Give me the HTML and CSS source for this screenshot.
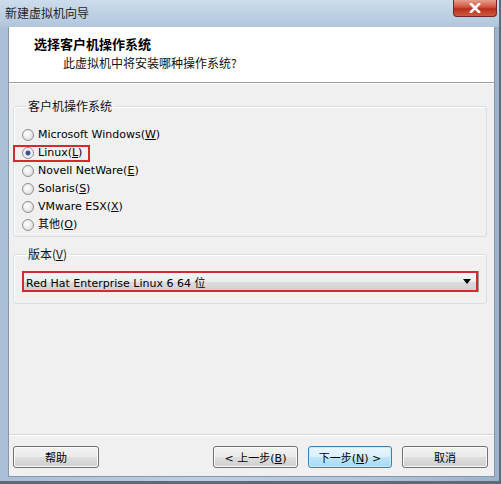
FILE: index.html
```html
<!DOCTYPE html>
<html lang="zh">
<head>
<meta charset="utf-8">
<link rel="stylesheet" href="styles.css">
</head>
<body>
<div class="window">
  <div class="titlebar">
    <span class="title">新建虚拟机向导</span>
    <span class="close"><svg width="14" height="10" viewBox="0 0 14 10"><path d="M3 1 L11 9 M11 1 L3 9" stroke="#fff" stroke-width="2.6" stroke-linecap="square"/></svg></span>
  </div>
  <div class="client">
    <div class="header">
      <div class="h-title">选择客户机操作系统</div>
      <div class="h-sub">此虚拟机中将安装哪种操作系统?</div>
    </div>
    <div class="body">
      <fieldset class="group os-group">
        <legend>客户机操作系统</legend>
        <div class="radio"><span class="dot"></span><span>Microsoft Windows(<u>W</u>)</span></div>
        <div class="radio marked"><span class="dot on"></span><span>Linux(<u>L</u>)</span><span class="mark"></span></div>
        <div class="radio"><span class="dot"></span><span>Novell NetWare(<u>E</u>)</span></div>
        <div class="radio"><span class="dot"></span><span>Solaris(<u>S</u>)</span></div>
        <div class="radio"><span class="dot"></span><span>VMware ESX(<u>X</u>)</span></div>
        <div class="radio"><span class="dot"></span><span>其他(<u>O</u>)</span></div>
      </fieldset>
      <fieldset class="group ver-group">
        <legend>版本(<u>V</u>)</legend>
        <div class="combo">
          <span class="combo-text">Red Hat Enterprise Linux 6 64 位</span>
          <svg class="arrow" width="8" height="5" viewBox="0 0 8 5"><path d="M0 0 H8 L4 5 Z" fill="#000"/></svg>
        </div>
      </fieldset>
    </div>
    <div class="footer">
      <button class="btn">帮助</button>
      <button class="btn back">&lt; 上一步(<u>B</u>)</button>
      <button class="btn focus">下一步(<u>N</u>) &gt;</button>
      <button class="btn">取消</button>
    </div>
  </div>
</div>
</body>
</html>
```
FILE: styles.css
```css
html, body {
  margin: 0;
  padding: 0;
  background: #ffffff;
}
.window {
  width: 501px;
  height: 484px;
  box-sizing: border-box;
  display: flex;
  flex-direction: column;
  background: linear-gradient(90deg, #a9bfd6 0%, #bccfe2 40%, #b3c7dc 70%, #9db3ca 100%);
  border-right: 2px solid #5b6b7d;
  border-bottom: 3px solid #5b6b7d;
  font-family: "DejaVu Sans", "Noto Sans CJK SC", sans-serif;
  font-size: 11px;
  color: #000;
}
.titlebar {
  height: 27px;
  flex: none;
  display: flex;
  align-items: flex-start;
  background: linear-gradient(180deg, #cddcec 0%, #bccfe2 60%, #b1c5da 100%);
}
.title {
  margin: 5px 0 0 5px;
  font-family: "Noto Sans CJK SC", sans-serif;
  font-size: 12px;
  line-height: 16px;
  color: #1e1e1e;
}
.close {
  margin-left: auto;
  margin-right: 2px;
  width: 44px;
  height: 17px;
  box-sizing: border-box;
  display: flex;
  align-items: center;
  justify-content: center;
  border: 1px solid #6b2a22;
  border-top: none;
  border-radius: 0 0 4px 4px;
  background: linear-gradient(180deg, #e6a08f 0%, #d0523f 45%, #b82d1c 55%, #cf5a3e 100%);
}
.client {
  flex: 1;
  margin: 0 4px 4px 8px;
  display: flex;
  flex-direction: column;
  background: #f0f0f0;
  border: 1px solid #8397ad;
  border-top: none;
}
.header {
  height: 55px;
  flex: none;
  background: #ffffff;
  border-bottom: 1px solid #a0a0a0;
  box-shadow: 0 1px 0 #ffffff;
  font-family: "Noto Sans CJK SC", sans-serif;
}
.h-title {
  margin: 8px 0 0 25px;
  font-size: 13px;
  font-weight: bold;
  line-height: 17px;
}
.h-sub {
  margin: 3px 0 0 54px;
  font-size: 12px;
  line-height: 16px;
  color: #111;
}
.body {
  flex: 1;
  padding: 16px 7px 0 4px;
  display: flex;
  flex-direction: column;
  gap: 10px;
  border-bottom: 1px solid #d6d6d6;
}
.group {
  margin: 0;
  border: 1px solid #d5dfe5;
  border-radius: 3px;
  box-shadow: inset 1px 1px 0 #ffffff;
  min-width: 0;
}
.group legend {
  padding: 0 2px;
  margin-left: 4px;
  line-height: 14px;
  font-size: 12px;
  font-family: "Noto Sans CJK SC", sans-serif;
  color: #111;
}
.os-group {
  padding: 13px 8px 2px 8px;
}
.radio {
  position: relative;
  height: 18px;
  display: flex;
  align-items: center;
  gap: 4px;
  line-height: 18px;
}
.radio u, .btn u, legend u { text-decoration: underline; }
.dot {
  width: 12px;
  height: 12px;
  border-radius: 50%;
  box-sizing: border-box;
  border: 1px solid #8e8f8f;
  background: radial-gradient(circle at 40% 40%, #ffffff 0%, #e8e8e8 55%, #cfcfcf 100%);
  flex: none;
}
.dot.on {
  background: radial-gradient(circle at 50% 50%, #2e3d58 0%, #3d6aa8 30%, #e6edf5 42%, #ffffff 100%);
}
.mark {
  position: absolute;
  left: -9px;
  top: 1px;
  width: 77px;
  height: 17px;
  box-sizing: border-box;
  border: 2px solid #d22a2e;
}
.ver-group {
  padding: 10px 8px 11px 8px;
}
.combo {
  height: 21px;
  box-sizing: border-box;
  display: flex;
  align-items: center;
  padding: 0 5px 0 2px;
  border: 2px solid #d42a2e;
  box-shadow: 1px 0 0 #9a9a9a;
  background: linear-gradient(180deg, #f6f6f6 0%, #ececec 50%, #dcdcdc 51%, #d2d2d2 100%);
}
.combo-text {
  flex: 1;
  font-size: 11px;
}
.footer {
  height: 41px;
  flex: none;
  display: flex;
  align-items: flex-start;
  gap: 10px;
  padding: 10px 6px 0 4px;
  border-top: 1px solid #ffffff;
  box-sizing: border-box;
}
.btn {
  width: 86px;
  height: 22px;
  margin: 0;
  padding: 0;
  border: 1px solid #707070;
  border-radius: 3px;
  background: linear-gradient(180deg, #f2f2f2 0%, #ebebeb 48%, #dddddd 52%, #cfcfcf 100%);
  box-shadow: inset 0 0 0 1px #fbfbfb;
  font-family: "DejaVu Sans", "Noto Sans CJK SC", sans-serif;
  font-size: 11px;
  color: #000;
}
.btn.back {
  margin-left: auto;
  width: 85px;
}
.btn.focus {
  width: 84px;
  border-color: #3c7fb1;
  background: linear-gradient(180deg, #eaf6fd 0%, #d9f0fc 48%, #bee6fd 52%, #a7d9f5 100%);
  box-shadow: inset 0 0 0 1px #c6ecfd;
}
```
